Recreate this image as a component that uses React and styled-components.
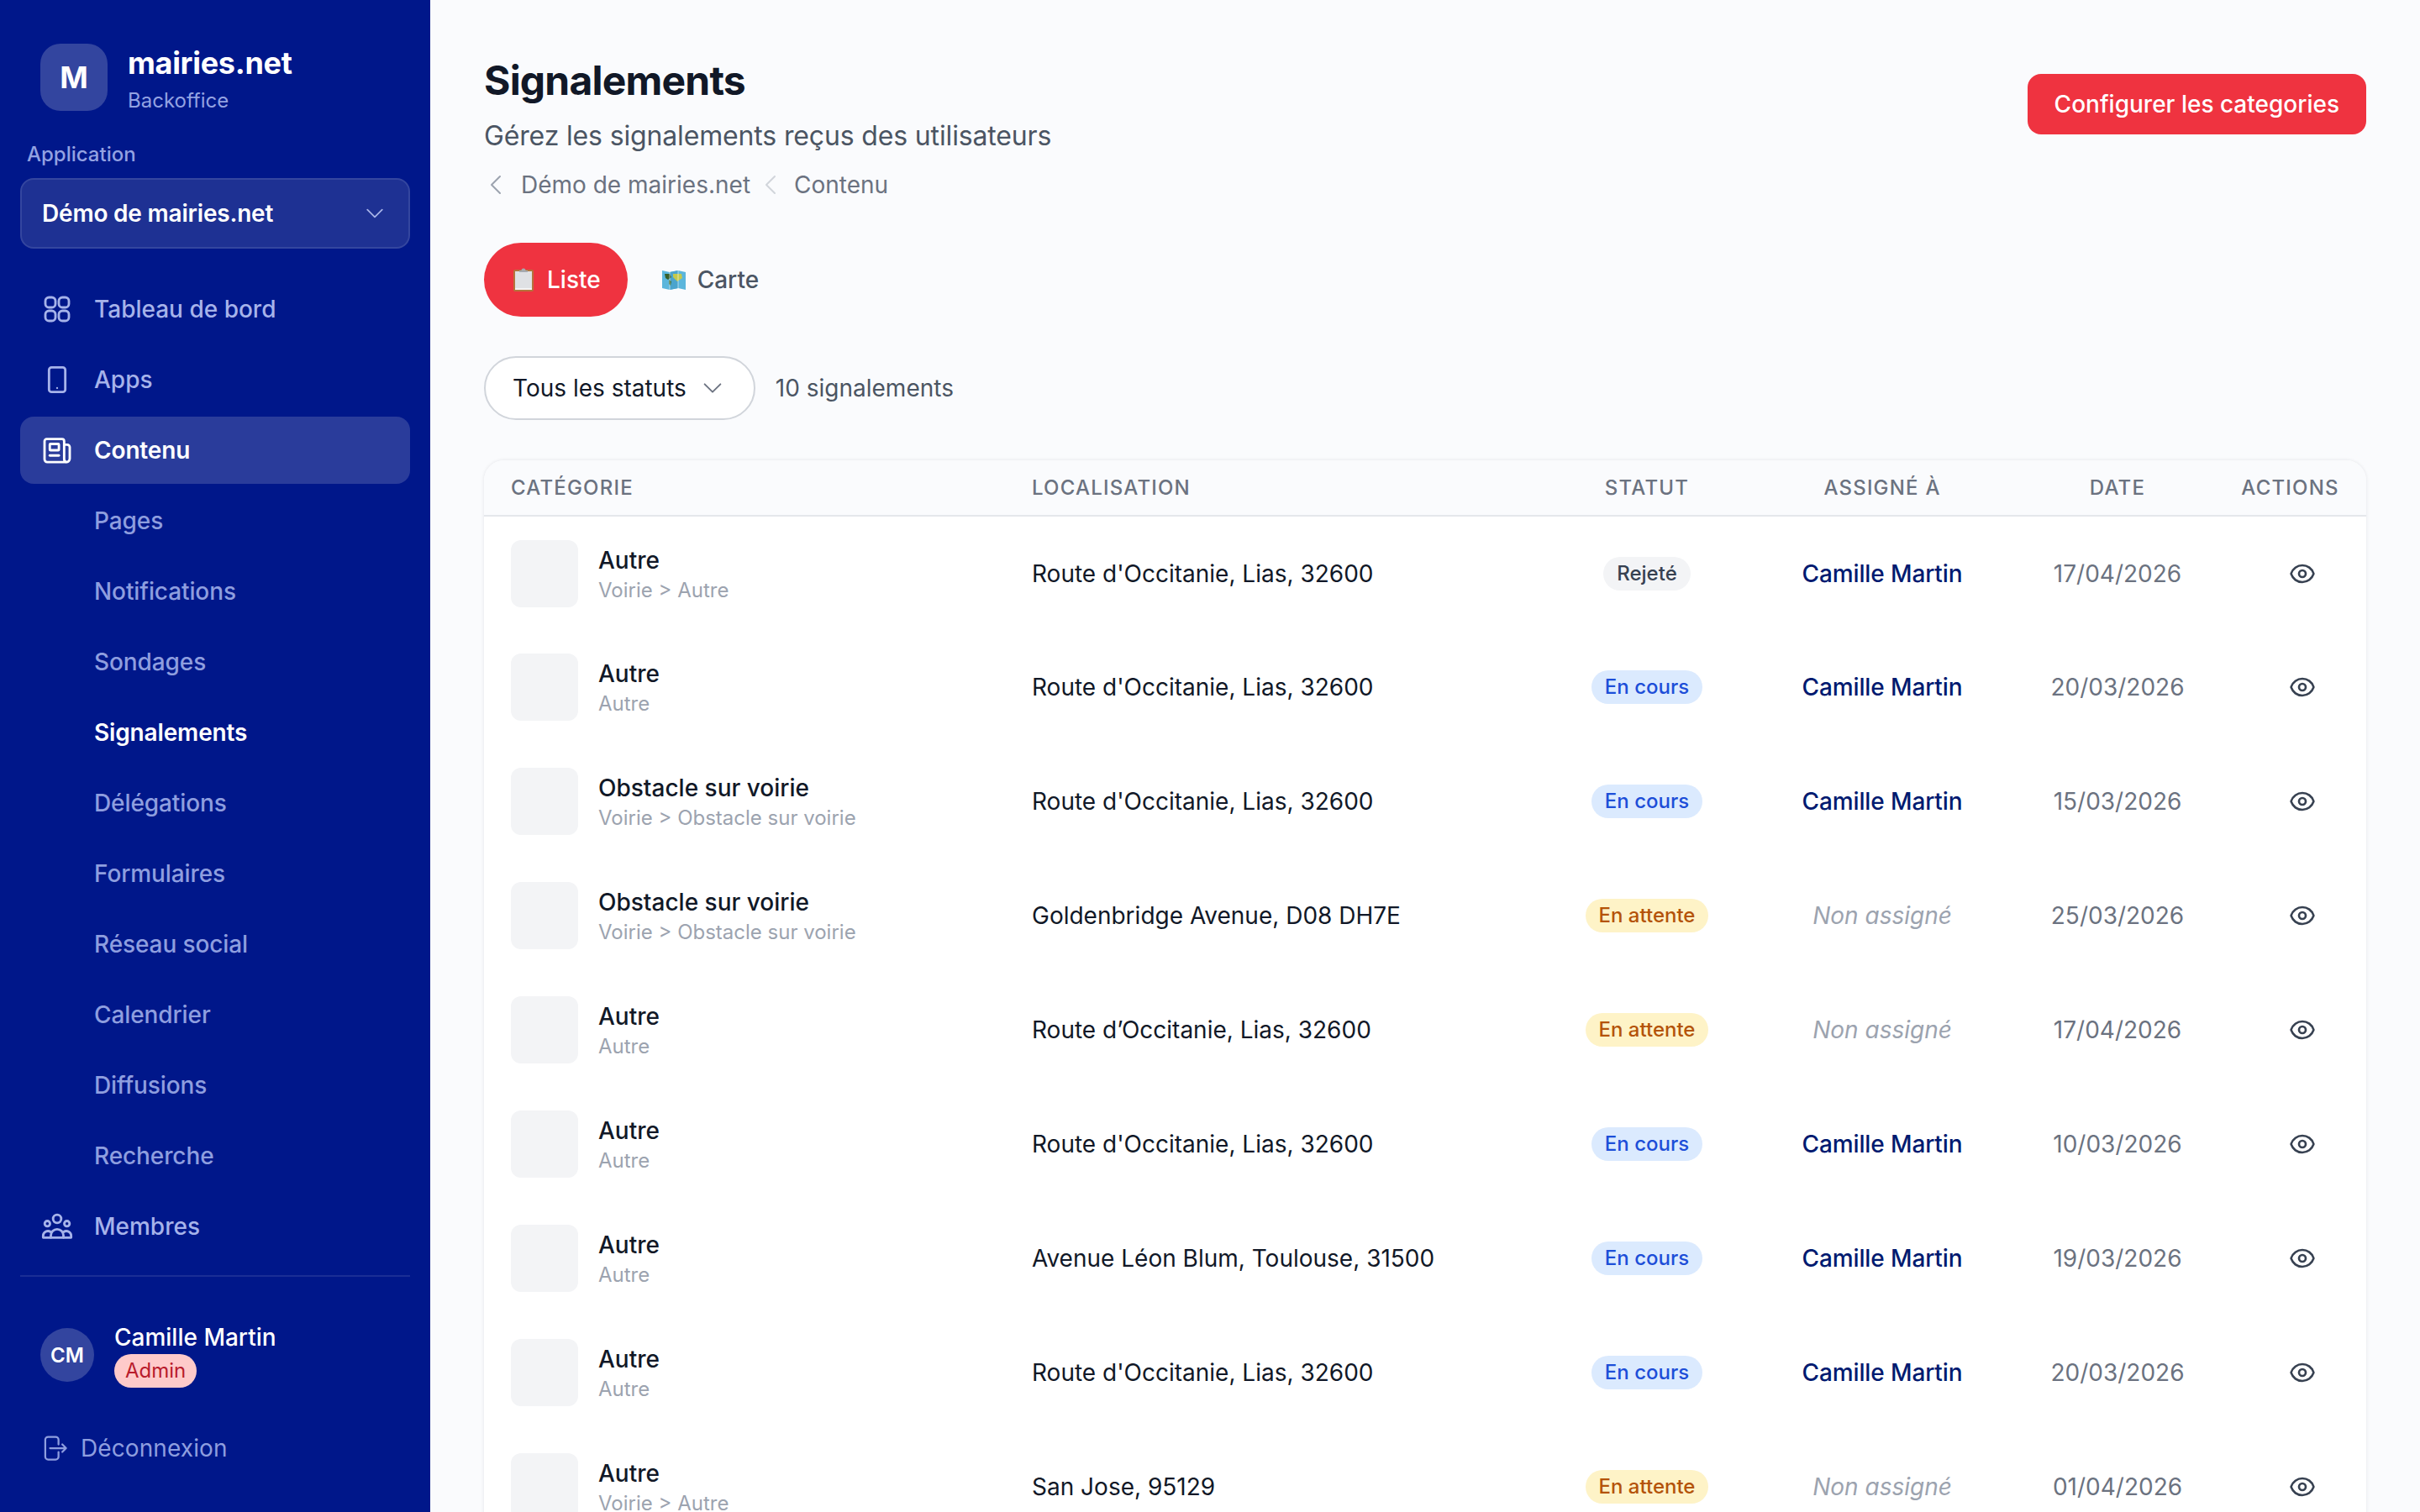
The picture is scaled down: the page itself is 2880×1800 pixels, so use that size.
import React from "react";
import styled, { createGlobalStyle } from "styled-components";
import {
  HiOutlineArrowRightOnRectangle,
  HiOutlineEye,
  HiOutlineChevronDown,
  HiOutlineChevronLeft,
} from "react-icons/hi2";

const Global = createGlobalStyle`
  html, body { margin: 0; padding: 0; background: #fafbfd; }
  body { font-family: Inter, "Liberation Sans", sans-serif; -webkit-font-smoothing: antialiased; }
  * { box-sizing: border-box; }
`;

const Shell = styled.div`
  display: flex;
  height: 1800px;
  overflow: hidden;
`;

const Sidebar = styled.aside`
  flex: 0 0 512px;
  height: 100%;
  background: #00178a;
  padding: 48px 24px 0;
  display: flex;
  flex-direction: column;
`;

const Brand = styled.div`
  display: flex;
  align-items: center;
  gap: 24px;
  padding-left: 24px;
`;

const LogoBox = styled.div`
  width: 80px;
  height: 80px;
  border-radius: 24px;
  background: #33459f;
  color: #fff;
  font-size: 36px;
  font-weight: 700;
  display: flex;
  align-items: center;
  justify-content: center;
`;

const BrandText = styled.div`
  display: flex;
  flex-direction: column;
  gap: 8px;
  margin-top: 6px;
`;

const BrandName = styled.div`
  color: #fff;
  font-size: 36px;
  line-height: 42px;
  font-weight: 700;
  letter-spacing: -0.3px;
`;

const BrandSub = styled.div`
  color: #93a2e2;
  font-size: 24px;
  line-height: 32px;
`;

const AppLabel = styled.div`
  color: #93a2e2;
  font-size: 24px;
  font-weight: 500;
  line-height: 32px;
  margin: 32px 0 0 8px;
`;

const AppSelect = styled.div`
  height: 84px;
  margin-top: 12px;
  border-radius: 16px;
  border: 2px solid #34469f;
  background: #1e3193;
  color: #fff;
  font-size: 28px;
  font-weight: 600;
  letter-spacing: -0.2px;
  display: flex;
  align-items: center;
  justify-content: space-between;
  padding: 0 24px;
  svg { width: 28px; height: 28px; color: #a8b4e8; margin-right: 2px; }
`;

const Nav = styled.nav`
  display: flex;
  flex-direction: column;
  gap: 4px;
  margin-top: 32px;
`;

const NavItem = styled.div`
  height: 80px;
  border-radius: 16px;
  display: flex;
  align-items: center;
  gap: 24px;
  padding-left: ${(p) => (p.$sub ? "88px" : "24px")};
  font-size: 28px;
  font-weight: ${(p) => (p.$bright ? 600 : 500)};
  letter-spacing: ${(p) => (p.$bright ? "-0.15px" : p.$sub ? "-0.1px" : "0")};
  color: ${(p) => (p.$bright ? "#fff" : p.$sub ? "#8e9edf" : "#a6b3ea")};
  background: ${(p) => (p.$active ? "#2a3c9b" : "transparent")};
  svg { width: 40px; height: 40px; flex: none; }
`;

const Divider = styled.div`
  height: 2px;
  background: #1a2e95;
  margin-top: 18px;
`;

const UserRow = styled.div`
  display: flex;
  align-items: center;
  gap: 24px;
  padding-left: 24px;
  margin-top: 54px;
`;

const Avatar = styled.div`
  width: 64px;
  height: 64px;
  border-radius: 50%;
  background: #33459f;
  color: #fff;
  font-size: 24px;
  font-weight: 600;
  display: flex;
  align-items: center;
  justify-content: center;
`;

const UserText = styled.div`
  display: flex;
  flex-direction: column;
  align-items: flex-start;
  gap: 2px;
`;

const UserName = styled.div`
  color: #fff;
  font-size: 28px;
  line-height: 36px;
  font-weight: 500;
`;

const AdminBadge = styled.span`
  background: #fecaca;
  color: #b91c2c;
  font-size: 24px;
  line-height: 40px;
  font-weight: 400;
  padding: 0 13px;
  border-radius: 20px;
`;

const Logout = styled.div`
  display: flex;
  align-items: center;
  gap: 14px;
  padding-left: 22px;
  margin-top: 54px;
  color: #8e9edf;
  font-size: 28px;
  font-weight: 400;
  letter-spacing: 0.1px;
  svg { width: 36px; height: 36px; }
`;

const Main = styled.main`
  flex: 1;
  min-width: 0;
  padding: 60px 64px 0;
  background: #fafbfd;
`;

const Header = styled.div`
  display: flex;
  justify-content: space-between;
  align-items: flex-start;
`;

const Title = styled.h1`
  margin: 0;
  color: #111827;
  font-size: 48px;
  line-height: 72px;
  font-weight: 700;
  letter-spacing: -0.8px;
`;

const Subtitle = styled.p`
  margin: 6px 0 0;
  color: #4b5563;
  font-size: 32px;
  line-height: 48px;
  letter-spacing: -0.15px;
`;

const Crumbs = styled.div`
  display: flex;
  align-items: center;
  margin-top: 14px;
  color: #6b7280;
  font-size: 28px;
  line-height: 40px;
  height: 40px;
`;

const CrumbIcon = styled.span`
  display: inline-flex;
  color: ${(p) => (p.$light ? "#d1d5db" : "#9ca3af")};
  margin: ${(p) => (p.$light ? "0 12px 0 8px" : "0 14px 0 -2px")};
  svg { width: 32px; height: 32px; }
`;

const PrimaryButton = styled.button`
  margin-top: 28px;
  height: 72px;
  padding: 0 32px;
  border: none;
  border-radius: 16px;
  background: #ef3340;
  color: #fff;
  font-family: inherit;
  font-size: 28px;
  font-weight: 500;
`;

const Tabs = styled.div`
  display: flex;
  gap: 8px;
  margin-top: 49px;
`;

const Tab = styled.div`
  height: 88px;
  border-radius: 44px;
  padding: 0 32px;
  display: flex;
  align-items: center;
  gap: 13px;
  font-size: 28px;
  font-weight: 500;
  background: ${(p) => (p.$active ? "#ef3340" : "transparent")};
  color: ${(p) => (p.$active ? "#fff" : "#4b5563")};
`;

const FilterRow = styled.div`
  display: flex;
  align-items: center;
  gap: 24px;
  margin-top: 47px;
`;

const Filter = styled.div`
  height: 76px;
  border: 2px solid #d1d5db;
  border-radius: 38px;
  background: #fff;
  color: #111827;
  font-size: 28px;
  padding: 0 32px 0 32px;
  display: flex;
  align-items: center;
  gap: 16px;
  svg { width: 30px; height: 30px; color: #6b7280; margin-right: 2px; }
`;

const Count = styled.span`
  color: #4b5563;
  font-size: 28px;
`;

const Card = styled.div`
  margin-top: 48px;
  background: #fff;
  border-radius: 24px 24px 0 0;
  box-shadow: 0 0 4px rgba(17, 24, 39, 0.1);
  overflow: hidden;
`;

const Table = styled.table`
  width: 100%;
  table-layout: fixed;
  border-collapse: collapse;
`;

const Th = styled.th`
  height: 66px;
  padding: 0 ${(p) => (p.$left ? "32px" : "0")};
  background: #fafbfd;
  border-bottom: 2px solid #e5e7eb;
  color: #6b7280;
  font-size: 24px;
  font-weight: 500;
  letter-spacing: 1.2px;
  text-transform: uppercase;
  text-align: ${(p) => (p.$left ? "left" : "center")};
`;

const Td = styled.td`
  height: 136px;
  padding: 0 ${(p) => (p.$left ? "32px" : "0")};
  text-align: ${(p) => (p.$left ? "left" : "center")};
  font-size: 28px;
  color: #111827;
`;

const Category = styled.div`
  display: flex;
  align-items: center;
  gap: 24px;
`;

const Thumb = styled.div`
  width: 80px;
  height: 80px;
  border-radius: 12px;
  background: #f3f4f6;
  flex: none;
`;

const CatName = styled.div`
  font-size: 28px;
  line-height: 40px;
  font-weight: 500;
  color: #111827;
`;

const CatPath = styled.div`
  font-size: 24px;
  line-height: 32px;
  color: #9ca3af;
`;

const tones = {
  gray: ["#f3f4f6", "#374151"],
  blue: ["#dbeafe", "#1d4ed8"],
  amber: ["#fef3c7", "#b45309"],
};

const Status = styled.span`
  display: inline-block;
  padding: 0 16px;
  line-height: 40px;
  border-radius: 20px;
  font-size: 24px;
  font-weight: 500;
  background: ${(p) => tones[p.$tone][0]};
  color: ${(p) => tones[p.$tone][1]};
`;

const Assignee = styled.span`
  color: ${(p) => (p.$none ? "#9ca3af" : "#001a70")};
  font-style: ${(p) => (p.$none ? "italic" : "normal")};
  font-weight: ${(p) => (p.$none ? 400 : 500)};
  letter-spacing: ${(p) => (p.$none ? "0" : "-0.12px")};
`;

const DateText = styled.span`
  color: #6b7280;
`;

const EyeCell = styled.div`
  display: flex;
  justify-content: center;
  padding-left: 28px;
  color: #374151;
  svg { width: 32px; height: 32px; stroke-width: 2; }
`;

const EmojiIcon = styled.svg`
  width: 30px;
  height: 30px;
  flex: none;
`;

const StrokeIcon = ({ children }) => (
  <svg viewBox="0 0 24 24" fill="none" stroke="currentColor" strokeWidth="1.7" strokeLinejoin="round" strokeLinecap="round">
    {children}
  </svg>
);

const GridIcon = () => (
  <StrokeIcon>
    <rect x="3.6" y="3.6" width="7.2" height="7.2" rx="2.6" />
    <rect x="13.2" y="3.6" width="7.2" height="7.2" rx="2.6" />
    <rect x="3.6" y="13.2" width="7.2" height="7.2" rx="2.6" />
    <rect x="13.2" y="13.2" width="7.2" height="7.2" rx="2.6" />
  </StrokeIcon>
);

const Tablet = () => (
  <StrokeIcon>
    <rect x="6.2" y="3.2" width="11.6" height="17.6" rx="1.8" />
    <circle cx="12" cy="18" r="0.7" fill="currentColor" stroke="none" />
  </StrokeIcon>
);

const Paper = () => (
  <StrokeIcon>
    <path d="M17 8h2.2A1.8 1.8 0 0 1 21 9.8V18a2.5 2.5 0 0 1-2.5 2.5H5A2 2 0 0 1 3 18.5V5.5A1.5 1.5 0 0 1 4.5 4h11A1.5 1.5 0 0 1 17 5.5V18a2.5 2.5 0 0 0 1.5 2.5" />
    <rect x="6.75" y="7.5" width="6.5" height="4.5" rx="0.5" />
    <path d="M6.75 15.75h6.5" />
  </StrokeIcon>
);

const Members = () => (
  <StrokeIcon>
    <circle cx="12" cy="6.6" r="2.9" />
    <circle cx="5" cy="10" r="1.9" />
    <circle cx="19" cy="10" r="1.9" />
    <path d="M7.5 20v-1.5a4.5 4.5 0 0 1 9 0V20" />
    <path d="M7.3 15.9A3.4 3.4 0 0 0 2 18.8V20h20v-1.2a3.4 3.4 0 0 0-5.3-2.9" />
  </StrokeIcon>
);

const Clipboard = () => (
  <EmojiIcon viewBox="0 0 30 30">
    <rect x="3" y="3" width="24" height="26" rx="2" fill="#b5733c" />
    <rect x="5" y="5" width="20" height="22" fill="#dfe1e4" />
    <rect x="5" y="25" width="20" height="2" fill="#f4f4f4" />
    <path d="M10 6 V4 H12.5 A2.5 2.5 0 0 1 17.5 4 H20 V6 Z" fill="#a6aab0" />
  </EmojiIcon>
);

const MapIcon = () => (
  <EmojiIcon viewBox="0 0 30 30">
    <path d="M1 4 L10 6 L20 4 L29 6 V27 L20 25 L10 27 L1 25 Z" fill="#5bb6dc" />
    <path d="M10 6 L20 4 V25 L10 27 Z" fill="#4ba4cd" />
    <path d="M4 8 L10 8 L12 12 L8 15 L5 13 Z" fill="#365f2a" />
    <path d="M14 8 L24 8 L25 13 L19 17 L16 14 L14 12 Z" fill="#c3c94d" />
    <path d="M9 15 L12 17 L11 22 L9 20 Z" fill="#3c6d2f" />
    <path d="M10 6 V27 M20 4 V25" stroke="#ffffff" strokeOpacity=".55" strokeWidth="1" />
  </EmojiIcon>
);

const subItems = [
  "Pages",
  "Notifications",
  "Sondages",
  "Signalements",
  "Délégations",
  "Formulaires",
  "Réseau social",
  "Calendrier",
  "Diffusions",
  "Recherche",
];

const OCC = "Route d'Occitanie, Lias, 32600";
const rows = [
  ["Autre", "Voirie > Autre", OCC, "Rejeté", "gray", true, "17/04/2026"],
  ["Autre", "Autre", OCC, "En cours", "blue", true, "20/03/2026"],
  ["Obstacle sur voirie", "Voirie > Obstacle sur voirie", OCC, "En cours", "blue", true, "15/03/2026"],
  ["Obstacle sur voirie", "Voirie > Obstacle sur voirie", "Goldenbridge Avenue, D08 DH7E", "En attente", "amber", false, "25/03/2026"],
  ["Autre", "Autre", "Route d’Occitanie, Lias, 32600", "En attente", "amber", false, "17/04/2026"],
  ["Autre", "Autre", OCC, "En cours", "blue", true, "10/03/2026"],
  ["Autre", "Autre", "Avenue Léon Blum, Toulouse, 31500", "En cours", "blue", true, "19/03/2026"],
  ["Autre", "Autre", OCC, "En cours", "blue", true, "20/03/2026"],
  ["Autre", "Voirie > Autre", "San Jose, 95129", "En attente", "amber", false, "01/04/2026"],
];

export default function App() {
  return (
    <Shell>
      <Global />
      <Sidebar>
        <Brand>
          <LogoBox>M</LogoBox>
          <BrandText>
            <BrandName>mairies.net</BrandName>
            <BrandSub>Backoffice</BrandSub>
          </BrandText>
        </Brand>
        <AppLabel>Application</AppLabel>
        <AppSelect>
          Démo de mairies.net
          <HiOutlineChevronDown />
        </AppSelect>
        <Nav>
          <NavItem><GridIcon />Tableau de bord</NavItem>
          <NavItem><Tablet />Apps</NavItem>
          <NavItem $active $bright><Paper />Contenu</NavItem>
          {subItems.map((s) => (
            <NavItem key={s} $sub $bright={s === "Signalements"}>{s}</NavItem>
          ))}
          <NavItem><Members />Membres</NavItem>
        </Nav>
        <Divider />
        <UserRow>
          <Avatar>CM</Avatar>
          <UserText>
            <UserName>Camille Martin</UserName>
            <AdminBadge>Admin</AdminBadge>
          </UserText>
        </UserRow>
        <Logout><HiOutlineArrowRightOnRectangle />Déconnexion</Logout>
      </Sidebar>
      <Main>
        <Header>
          <div>
            <Title>Signalements</Title>
            <Subtitle>Gérez les signalements reçus des utilisateurs</Subtitle>
            <Crumbs>
              <CrumbIcon><HiOutlineChevronLeft /></CrumbIcon>
              Démo de mairies.net
              <CrumbIcon $light><HiOutlineChevronLeft /></CrumbIcon>
              Contenu
            </Crumbs>
          </div>
          <PrimaryButton>Configurer les categories</PrimaryButton>
        </Header>
        <Tabs>
          <Tab $active><Clipboard />Liste</Tab>
          <Tab><MapIcon />Carte</Tab>
        </Tabs>
        <FilterRow>
          <Filter>Tous les statuts<HiOutlineChevronDown /></Filter>
          <Count>10 signalements</Count>
        </FilterRow>
        <Card>
          <Table>
            <colgroup>
              <col style={{ width: 620 }} />
              <col style={{ width: 649 }} />
              <col style={{ width: 230 }} />
              <col style={{ width: 330 }} />
              <col style={{ width: 230 }} />
              <col style={{ width: 181 }} />
            </colgroup>
            <thead>
              <tr>
                <Th $left>Catégorie</Th>
                <Th $left>Localisation</Th>
                <Th>Statut</Th>
                <Th>Assigné à</Th>
                <Th>Date</Th>
                <Th>Actions</Th>
              </tr>
            </thead>
            <tbody>
              {rows.map((r, i) => (
                <tr key={i}>
                  <Td $left>
                    <Category>
                      <Thumb />
                      <div>
                        <CatName>{r[0]}</CatName>
                        <CatPath>{r[1]}</CatPath>
                      </div>
                    </Category>
                  </Td>
                  <Td $left>{r[2]}</Td>
                  <Td><Status $tone={r[4]}>{r[3]}</Status></Td>
                  <Td><Assignee $none={!r[5]}>{r[5] ? "Camille Martin" : "Non assigné"}</Assignee></Td>
                  <Td><DateText>{r[6]}</DateText></Td>
                  <Td><EyeCell><HiOutlineEye /></EyeCell></Td>
                </tr>
              ))}
            </tbody>
          </Table>
        </Card>
      </Main>
    </Shell>
  );
}
